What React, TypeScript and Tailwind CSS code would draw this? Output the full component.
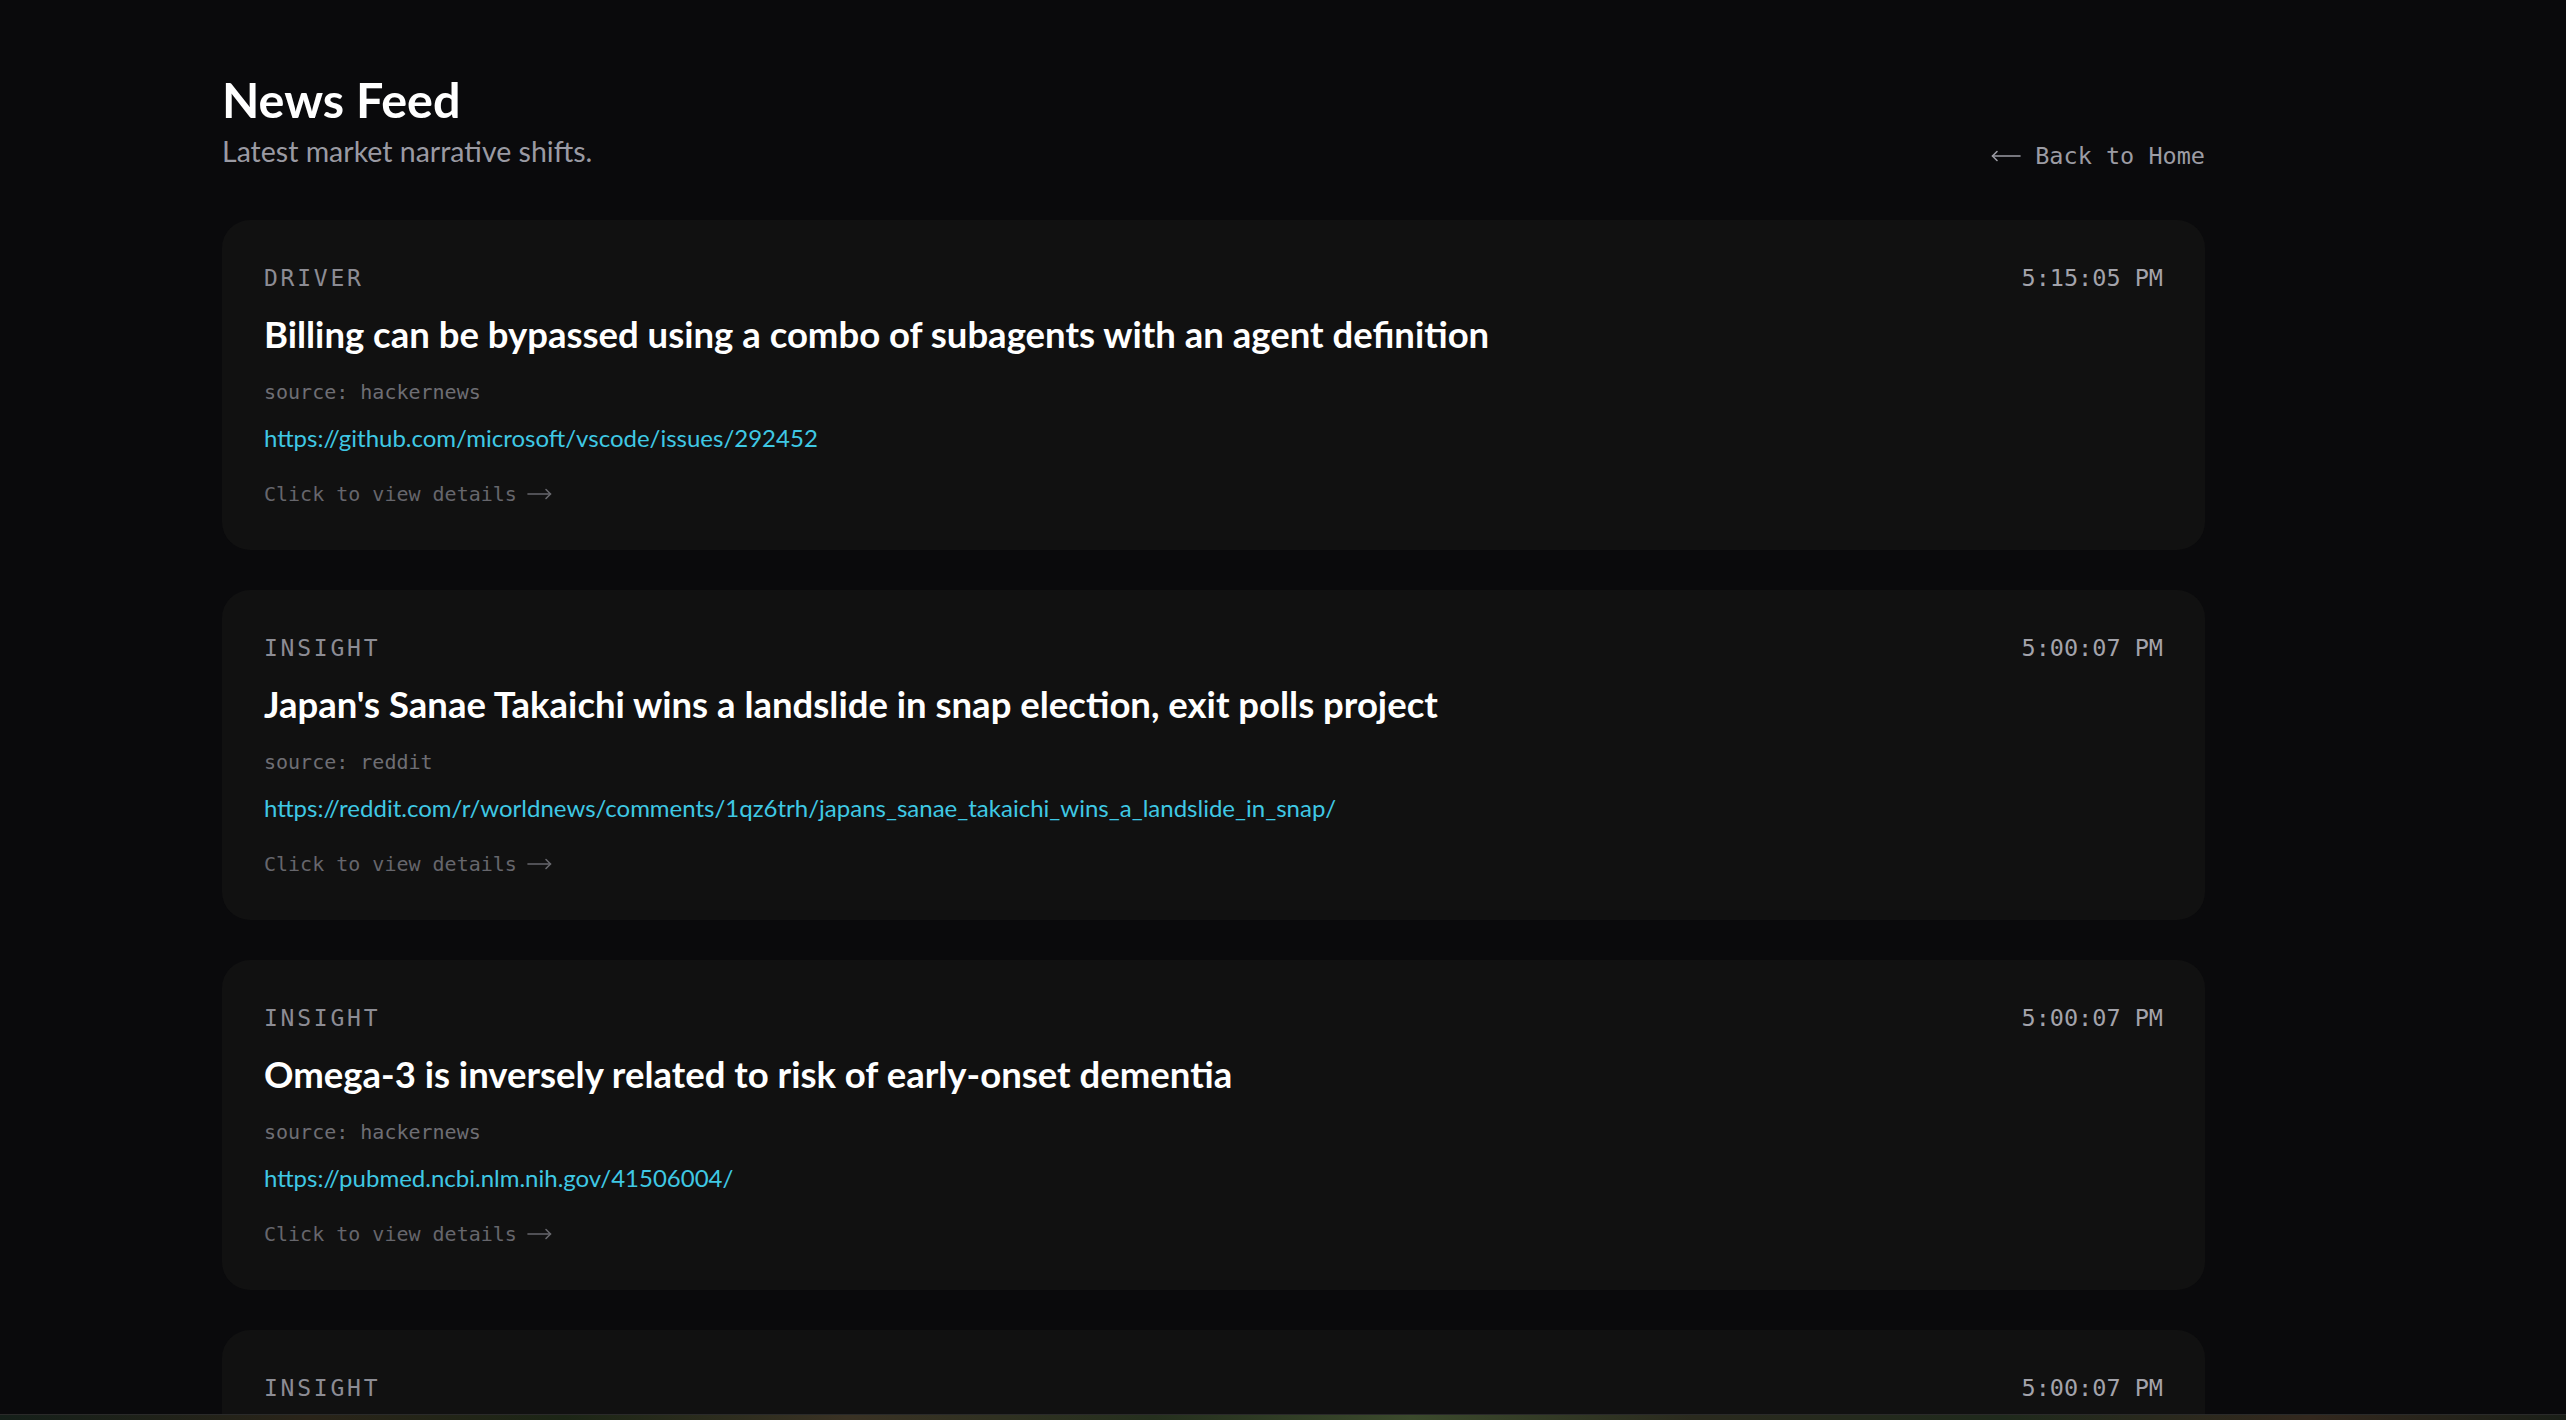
import React from 'react';

type Item = {
  kind: string;
  time: string;
  title: string;
  source: string;
  url: string;
};

const items: Item[] = [
  {
    kind: 'DRIVER',
    time: '5:15:05 PM',
    title: 'Billing can be bypassed using a combo of subagents with an agent definition',
    source: 'hackernews',
    url: 'https://github.com/microsoft/vscode/issues/292452',
  },
  {
    kind: 'INSIGHT',
    time: '5:00:07 PM',
    title: "Japan's Sanae Takaichi wins a landslide in snap election, exit polls project",
    source: 'reddit',
    url: 'https://reddit.com/r/worldnews/comments/1qz6trh/japans_sanae_takaichi_wins_a_landslide_in_snap/',
  },
  {
    kind: 'INSIGHT',
    time: '5:00:07 PM',
    title: 'Omega-3 is inversely related to risk of early-onset dementia',
    source: 'hackernews',
    url: 'https://pubmed.ncbi.nlm.nih.gov/41506004/',
  },
  {
    kind: 'INSIGHT',
    time: '5:00:07 PM',
    title: 'Markets react to overnight rate guidance from central banks',
    source: 'hackernews',
    url: 'https://news.ycombinator.com/item?id=42918311',
  },
];

const sans = "font-['Lato','Noto_Sans',sans-serif]";
const mono = "font-['DejaVu_Sans_Mono','Liberation_Mono',monospace]";

function LongArrow({ left = false, width = 25 }: { left?: boolean; width?: number }) {
  return (
    <svg
      width={width}
      height="12"
      viewBox={`0 0 ${width} 12`}
      fill="none"
      stroke="currentColor"
      strokeWidth="1.6"
      strokeLinecap="round"
      strokeLinejoin="round"
      className="inline-block"
    >
      {left ? (
        <>
          <path d={`M1.5 6H${width - 1}`} />
          <path d="M6 1.5L1.5 6L6 10.5" />
        </>
      ) : (
        <>
          <path d={`M1 6H${width - 1.5}`} />
          <path d={`M${width - 6} 1.5L${width - 1.5} 6L${width - 6} 10.5`} />
        </>
      )}
    </svg>
  );
}

function NewsCard({ item }: { item: Item }) {
  return (
    <div className="rounded-[28px] bg-[#111111] p-[42px]">
      <div className={`flex items-center justify-between leading-[32px] ${mono}`}>
        <span className="text-[23px] tracking-[0.12em] text-[#8c8c94]">{item.kind}</span>
        <span className="text-[23.5px] text-[#a3a3ab]">{item.time}</span>
      </div>
      <h2 className={`mt-[18px] text-[36.5px] font-bold leading-[44px] text-white ${sans}`}>
        {item.title}
      </h2>
      <p className={`mt-[22px] text-[20px] leading-[28px] text-[#6e6e74] ${mono}`}>
        source: {item.source}
      </p>
      <a
        href="#"
        className={`mt-[16px] block text-[24px] leading-[32px] text-[#3fc8e4] ${sans}`}
      >
        {item.url}
      </a>
      <p className={`mt-[26px] flex items-center gap-[10px] text-[20px] leading-[28px] text-[#66666c] ${mono}`}>
        Click to view details
        <LongArrow width={25} />
      </p>
    </div>
  );
}

export default function App() {
  return (
    <div className="min-h-screen bg-[#0a0a0c]">
      <div className="ml-[222px] w-[1983px] pb-[120px] pt-[71px]">
        <header className="flex items-end justify-between">
          <div>
            <h1 className={`text-[48.5px] font-bold leading-[56px] text-white ${sans}`}>News Feed</h1>
            <p className={`mt-[6px] text-[28.5px] leading-[36px] text-[#9a9aa3] ${sans}`}>
              Latest market narrative shifts.
            </p>
          </div>
          <a
            href="#"
            className={`flex items-center gap-[14px] text-[23.5px] leading-[26px] text-[#9c9ca4] ${mono}`}
          >
            <LongArrow left width={30} />
            Back to Home
          </a>
        </header>

        <div className="mt-[51px] flex flex-col gap-[40px]">
          {items.map((item, i) => (
            <NewsCard key={i} item={item} />
          ))}
        </div>
      </div>

      {/* strip of the background picture peeking in at the bottom */}
      <div className="fixed bottom-0 left-0 right-0 h-[6px] border-t border-[#2a2a2a] bg-[linear-gradient(90deg,#15201a_0%,#2a2419_12%,#1c2616_22%,#3a3224_33%,#25301e_45%,#3b4a2c_55%,#2a2a1e_66%,#1f2a1c_78%,#33281e_90%,#1a1f18_100%)]" />
    </div>
  );
}
